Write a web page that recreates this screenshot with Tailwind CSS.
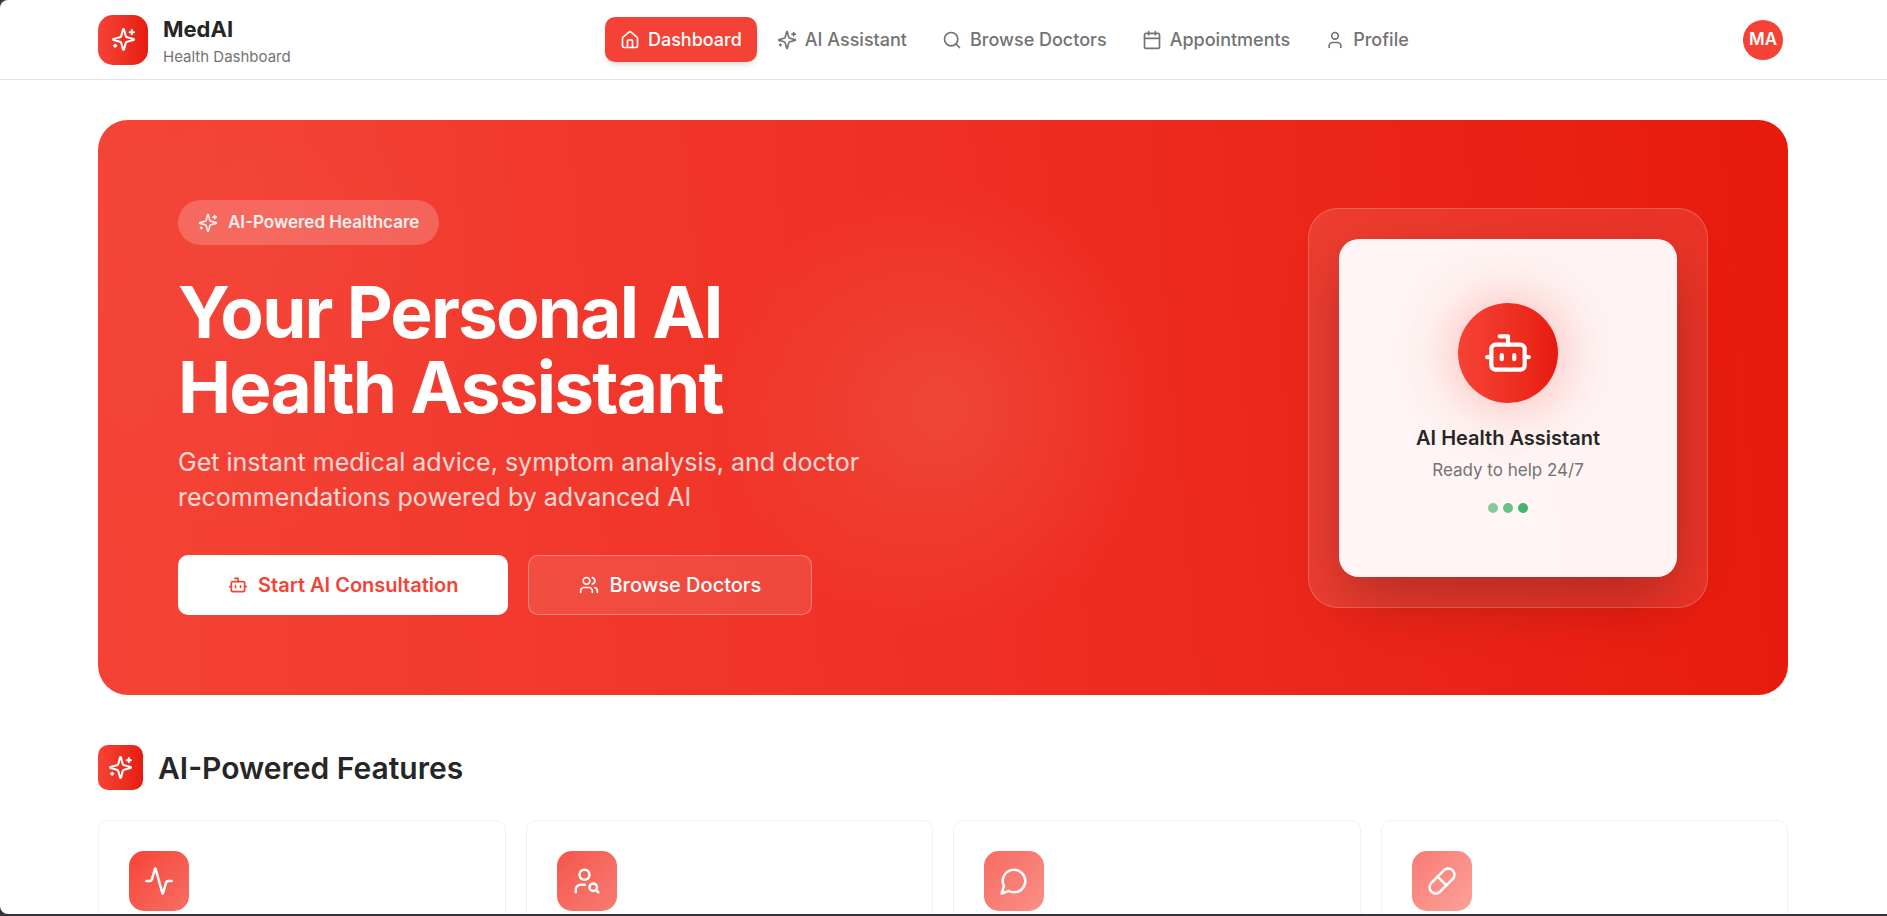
<!DOCTYPE html>
<html lang="en">
<head>
    <meta charset="UTF-8">
    <meta name="viewport" content="width=device-width, initial-scale=1.0">
    <title>MedAI - Health Dashboard</title>
    <script src="https://cdn.jsdelivr.net/npm/@tailwindcss/browser@4"></script>
</head>
<body class="bg-[#35363a] font-['Inter',sans-serif] text-[#262626]">
    <!-- Shared icons -->
    <svg class="hidden" aria-hidden="true">
        <symbol id="icon-sparkles" viewBox="0 0 24 24">
            <path d="M9.937 15.5A2 2 0 0 0 8.5 14.063l-6.135-1.582a.5.5 0 0 1 0-.962L8.5 9.936A2 2 0 0 0 9.937 8.5l1.582-6.135a.5.5 0 0 1 .963 0L14.063 8.5A2 2 0 0 0 15.5 9.937l6.135 1.581a.5.5 0 0 1 0 .964L15.5 14.063a2 2 0 0 0-1.437 1.437l-1.582 6.135a.5.5 0 0 1-.963 0z"/>
            <path d="M20 3v4M22 5h-4M4 17v2M5 18H3"/>
        </symbol>
        <symbol id="icon-bot" viewBox="0 0 24 24">
            <path d="M12 8V4H8"/>
            <rect width="16" height="12" x="4" y="8" rx="2"/>
            <path d="M2 14h2M20 14h2M15 13v2M9 13v2"/>
        </symbol>
    </svg>

    <div class="h-[calc(100vh-2px)] overflow-hidden rounded-l-lg bg-white">
        <header class="border-b border-[#e5e5e5]">
            <div class="flex h-[79px] items-center justify-between pl-[98px] pr-[99px]">
                <div class="flex items-center gap-[15px]">
                    <div class="flex size-[50px] items-center justify-center rounded-[15px] bg-linear-to-r from-[#f64235] to-[#e71a0c] text-white">
                        <svg class="size-[25px] fill-none stroke-current stroke-2 [stroke-linecap:round] [stroke-linejoin:round]"><use href="#icon-sparkles"/></svg>
                    </div>
                    <div class="pt-1">
                        <p class="text-[22px] leading-[30px] font-bold">MedAI</p>
                        <p class="text-[15px] leading-[25px] text-[#737373]">Health Dashboard</p>
                    </div>
                </div>

                <nav class="flex items-center gap-[5px] text-[18px] leading-[25px] font-medium text-[#737373]">
                    <a href="#" class="flex items-center gap-2 rounded-[10px] bg-[#f44336] px-[15px] py-[10px] text-white shadow-md">
                        <svg viewBox="0 0 24 24" class="size-5 fill-none stroke-current stroke-2 [stroke-linecap:round] [stroke-linejoin:round]">
                            <path d="M15 21v-8a1 1 0 0 0-1-1h-4a1 1 0 0 0-1 1v8"/>
                            <path d="M3 10a2 2 0 0 1 .709-1.528l7-5.999a2 2 0 0 1 2.582 0l7 5.999A2 2 0 0 1 21 10v9a2 2 0 0 1-2 2H5a2 2 0 0 1-2-2z"/>
                        </svg>
                        Dashboard
                    </a>
                    <a href="#" class="flex items-center gap-2 px-[15px] py-[10px]">
                        <svg class="size-5 fill-none stroke-current stroke-2 [stroke-linecap:round] [stroke-linejoin:round]"><use href="#icon-sparkles"/></svg>
                        AI Assistant
                    </a>
                    <a href="#" class="flex items-center gap-2 px-[15px] py-[10px]">
                        <svg viewBox="0 0 24 24" class="size-5 fill-none stroke-current stroke-2 [stroke-linecap:round] [stroke-linejoin:round]">
                            <circle cx="11" cy="11" r="8"/>
                            <path d="m21 21-4.3-4.3"/>
                        </svg>
                        Browse Doctors
                    </a>
                    <a href="#" class="flex items-center gap-2 px-[15px] py-[10px]">
                        <svg viewBox="0 0 24 24" class="size-5 fill-none stroke-current stroke-2 [stroke-linecap:round] [stroke-linejoin:round]">
                            <path d="M8 2v4M16 2v4M3 10h18"/>
                            <rect width="18" height="18" x="3" y="4" rx="2"/>
                        </svg>
                        Appointments
                    </a>
                    <a href="#" class="flex items-center gap-2 px-[15px] py-[10px]">
                        <svg viewBox="0 0 24 24" class="size-5 fill-none stroke-current stroke-2 [stroke-linecap:round] [stroke-linejoin:round]">
                            <path d="M19 21v-2a4 4 0 0 0-4-4H9a4 4 0 0 0-4 4v2"/>
                            <circle cx="12" cy="7" r="4"/>
                        </svg>
                        Profile
                    </a>
                </nav>

                <button type="button" class="p-[5px]" aria-label="Account">
                    <span class="flex size-10 items-center justify-center rounded-full bg-[#f44336] text-[17px] font-semibold text-white">MA</span>
                </button>
            </div>
        </header>

        <main class="pt-10 pl-[98px] pr-[99px]">
            <!-- Hero -->
            <section class="flex items-center justify-between rounded-[30px] bg-[radial-gradient(circle_at_50%_50%,rgba(238,84,70,0.6)_0%,rgba(238,84,70,0)_25%),radial-gradient(circle_at_10%_20%,rgba(255,255,255,0.03)_0%,rgba(255,255,255,0)_20%),linear-gradient(85deg,#f44336_0%,#ef3024_50%,#e71a0c_100%)] p-20">
                <div>
                    <p class="inline-flex items-center gap-[10px] rounded-full bg-white/20 px-5 py-[10px] text-[17px] leading-[25px] font-semibold text-white/90">
                        <svg class="size-5 fill-none stroke-current stroke-2 [stroke-linecap:round] [stroke-linejoin:round]"><use href="#icon-sparkles"/></svg>
                        AI-Powered Healthcare
                    </p>
                    <h1 class="mt-[30px] text-[71px] leading-[75px] font-bold tracking-tight text-white">Your Personal AI<br>Health Assistant</h1>
                    <p class="mt-5 max-w-[700px] text-[25px] leading-[35px] text-white/80">Get instant medical advice, symptom analysis, and doctor recommendations powered by advanced AI</p>
                    <div class="mt-10 flex gap-5 text-[20px]">
                        <button type="button" class="flex h-[60px] items-center gap-[10px] rounded-[10px] bg-white px-[50px] font-semibold text-[#f44336]">
                            <svg class="size-5 fill-none stroke-current stroke-2 [stroke-linecap:round] [stroke-linejoin:round]"><use href="#icon-bot"/></svg>
                            Start AI Consultation
                        </button>
                        <button type="button" class="flex h-[60px] items-center gap-[10px] rounded-[10px] border border-white/30 bg-white/10 px-[50px] font-medium text-white">
                            <svg viewBox="0 0 24 24" class="size-5 fill-none stroke-current stroke-2 [stroke-linecap:round] [stroke-linejoin:round]">
                                <path d="M16 21v-2a4 4 0 0 0-4-4H6a4 4 0 0 0-4 4v2"/>
                                <circle cx="9" cy="7" r="4"/>
                                <path d="M22 21v-2a4 4 0 0 0-3-3.87M16 3.13a4 4 0 0 1 0 7.75"/>
                            </svg>
                            Browse Doctors
                        </button>
                    </div>
                </div>

                <div class="size-[400px] rounded-[30px] border border-white/20 bg-white/10 p-[30px]">
                    <div class="flex h-full flex-col items-center justify-center rounded-[20px] bg-white/95 shadow-[0_25px_60px_-5px_rgba(0,0,0,0.25)]">
                        <div class="flex size-[100px] items-center justify-center rounded-full bg-linear-to-r from-[#f64235] to-[#e71a0c] text-white shadow-[0_0_60px_rgba(244,67,54,0.4)]">
                            <svg class="size-[50px] fill-none stroke-current stroke-2 [stroke-linecap:round] [stroke-linejoin:round]"><use href="#icon-bot"/></svg>
                        </div>
                        <h2 class="mt-5 text-[20px] leading-[30px] font-semibold">AI Health Assistant</h2>
                        <p class="mt-[5px] text-[17px] leading-[25px] text-[#737373]">Ready to help 24/7</p>
                        <div class="mt-5 flex gap-[5px]">
                            <span class="size-[10px] rounded-full bg-[#84cb9c]"></span>
                            <span class="size-[10px] rounded-full bg-[#69c088]"></span>
                            <span class="size-[10px] rounded-full bg-[#45b36b]"></span>
                        </div>
                    </div>
                </div>
            </section>

            <!-- Features -->
            <section class="mt-[50px]">
                <div class="flex items-center gap-[15px]">
                    <div class="flex size-[45px] items-center justify-center rounded-[10px] bg-linear-to-r from-[#f64235] to-[#e71a0c] text-white">
                        <svg class="size-[25px] fill-none stroke-current stroke-2 [stroke-linecap:round] [stroke-linejoin:round]"><use href="#icon-sparkles"/></svg>
                    </div>
                    <h2 class="text-[30px] leading-[40px] font-semibold">AI-Powered Features</h2>
                </div>

                <div class="mt-[30px] grid grid-cols-4 gap-5">
                    <article class="h-60 rounded-[10px] border border-[#f2f2f2] p-[30px]">
                        <div class="flex size-[60px] items-center justify-center rounded-[15px] bg-linear-to-br from-[#f64336] to-[#f76d63] text-white">
                            <svg viewBox="0 0 24 24" class="size-[30px] fill-none stroke-current stroke-2 [stroke-linecap:round] [stroke-linejoin:round]">
                                <path d="M22 12h-2.48a2 2 0 0 0-1.93 1.46l-2.35 8.36a.25.25 0 0 1-.48 0L9.24 2.18a.25.25 0 0 0-.48 0l-2.35 8.36A2 2 0 0 1 4.49 12H2"/>
                            </svg>
                        </div>
                    </article>
                    <article class="h-60 rounded-[10px] border border-[#f2f2f2] p-[30px]">
                        <div class="flex size-[60px] items-center justify-center rounded-[15px] bg-linear-to-br from-[#f5554a] to-[#f87b73] text-white">
                            <svg viewBox="0 0 24 24" class="size-[30px] fill-none stroke-current stroke-2 [stroke-linecap:round] [stroke-linejoin:round]">
                                <circle cx="10" cy="7" r="4"/>
                                <path d="M10.3 15H7a4 4 0 0 0-4 4v2"/>
                                <circle cx="17" cy="17" r="3"/>
                                <path d="m21 21-1.9-1.9"/>
                            </svg>
                        </div>
                    </article>
                    <article class="h-60 rounded-[10px] border border-[#f2f2f2] p-[30px]">
                        <div class="flex size-[60px] items-center justify-center rounded-[15px] bg-linear-to-br from-[#f76b61] to-[#fa8f88] text-white">
                            <svg viewBox="0 0 24 24" class="size-[30px] fill-none stroke-current stroke-2 [stroke-linecap:round] [stroke-linejoin:round]">
                                <path d="M7.9 20A9 9 0 1 0 4 16.1L2 22Z"/>
                            </svg>
                        </div>
                    </article>
                    <article class="h-60 rounded-[10px] border border-[#f2f2f2] p-[30px]">
                        <div class="flex size-[60px] items-center justify-center rounded-[15px] bg-linear-to-br from-[#f87b73] to-[#fba19b] text-white">
                            <svg viewBox="0 0 24 24" class="size-[30px] fill-none stroke-current stroke-2 [stroke-linecap:round] [stroke-linejoin:round]">
                                <path d="m10.5 20.5 10-10a4.95 4.95 0 1 0-7-7l-10 10a4.95 4.95 0 1 0 7 7Z"/>
                                <path d="m8.5 8.5 7 7"/>
                            </svg>
                        </div>
                    </article>
                </div>
            </section>
        </main>
    </div>
</body>
</html>
